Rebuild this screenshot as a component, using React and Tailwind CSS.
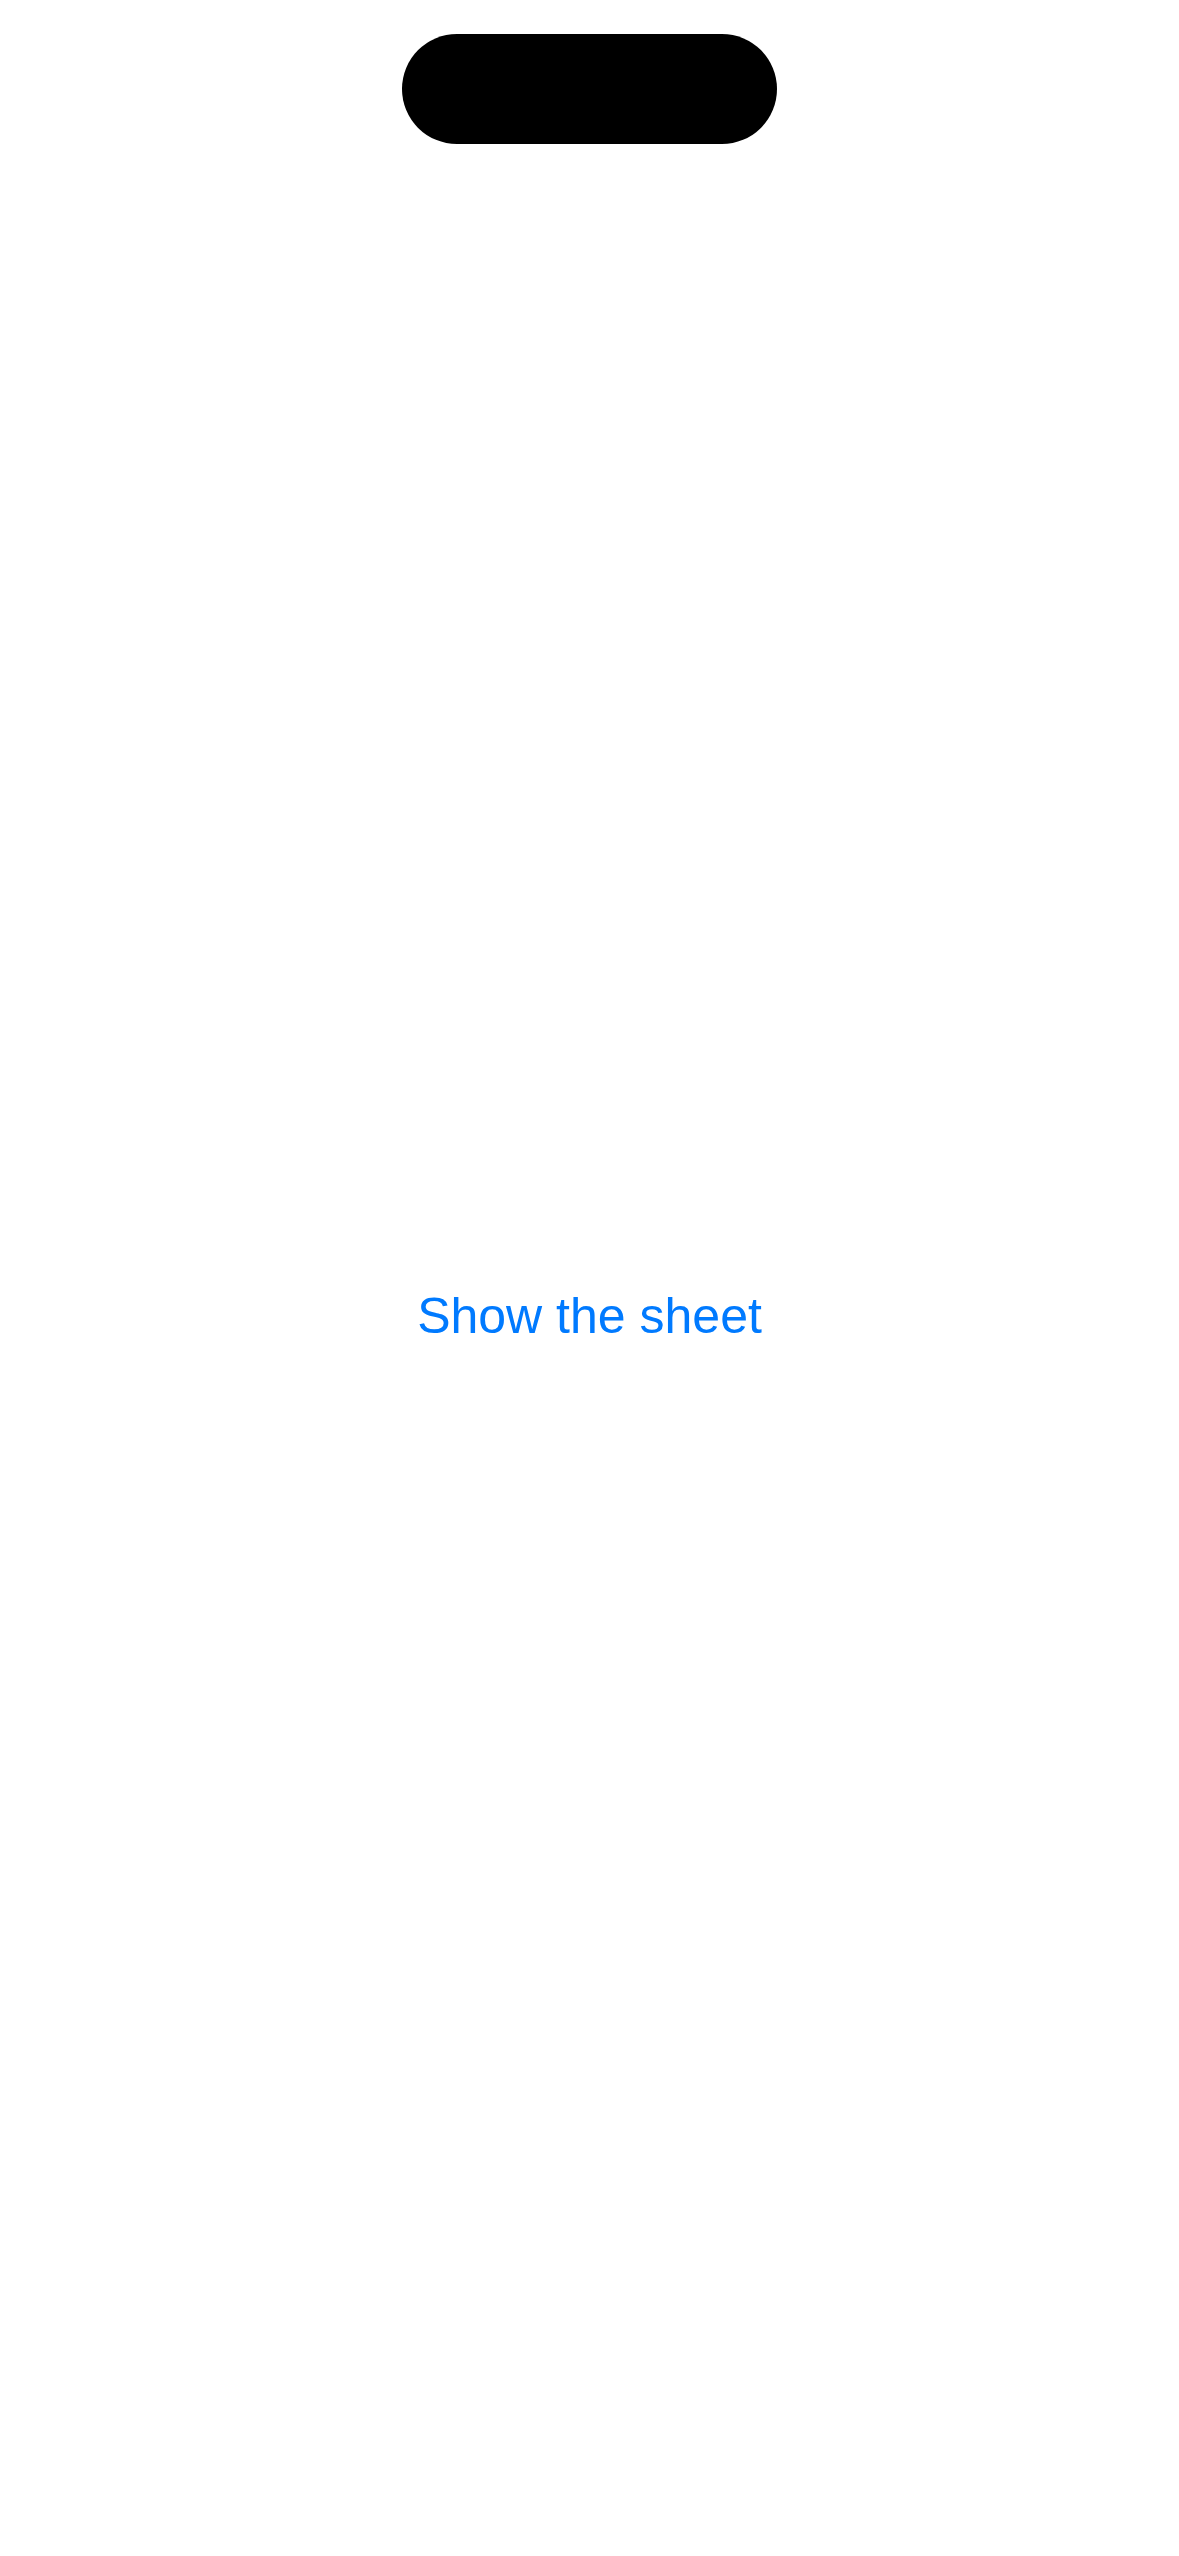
export default function App() {
  return (
    <div className="w-[1179px] h-[2556px] bg-white flex flex-col items-center font-['Liberation_Sans',Arial,sans-serif]">
      <div className="mt-[34px] w-[375px] h-[110px] rounded-[55px] bg-black" />
      <button className="mt-[1142px] text-[50px] leading-[60px] text-[#007AFF] font-['Liberation_Sans',Arial,sans-serif]">
        Show the sheet
      </button>
    </div>
  );
}
